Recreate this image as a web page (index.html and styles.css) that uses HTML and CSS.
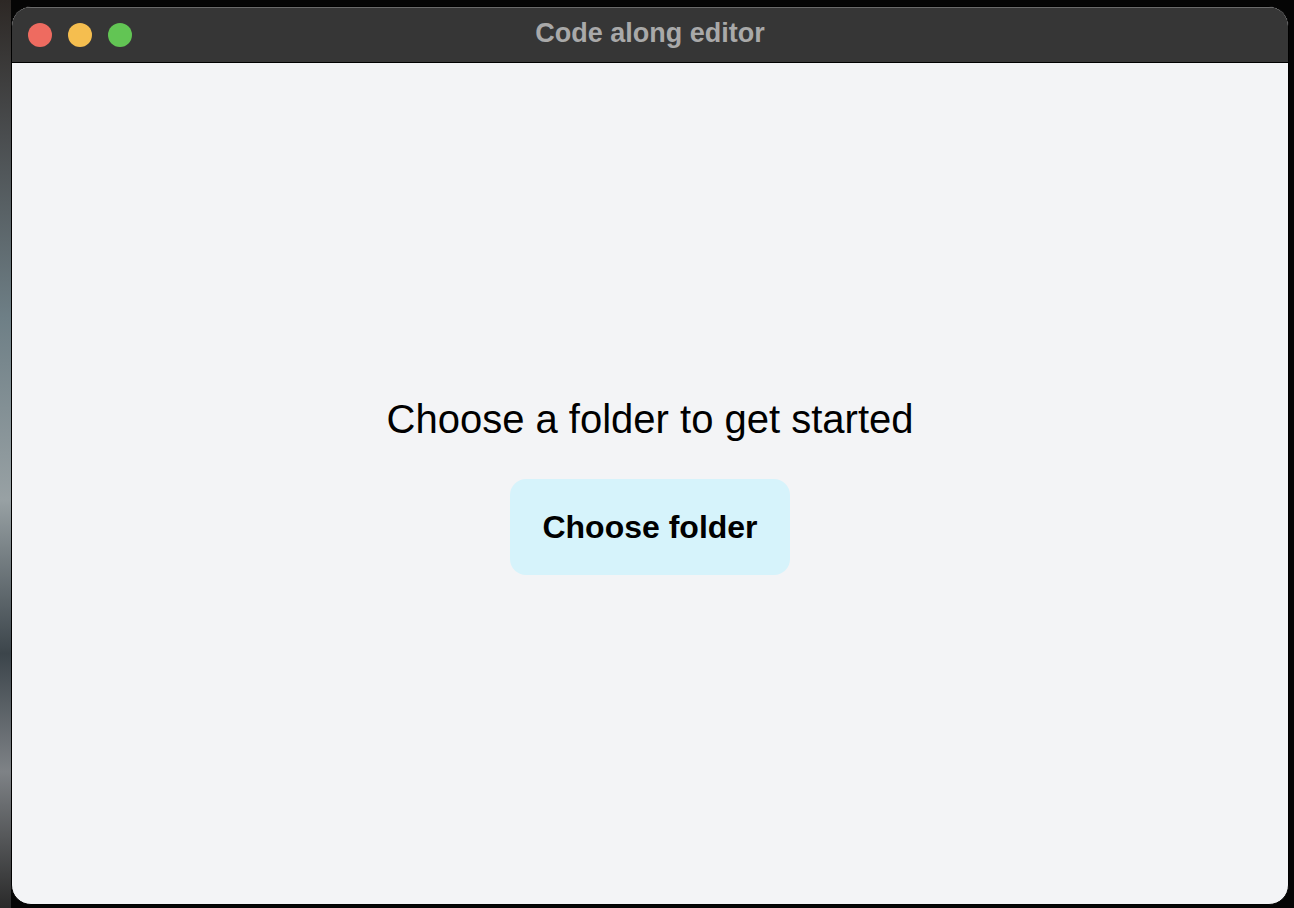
FILE: index.html
```html
<!DOCTYPE html>
<html lang="en">
<head>
<meta charset="utf-8">
<title>Code along editor</title>
<link rel="stylesheet" href="styles.css">
</head>
<body>
<div class="window">
  <header class="titlebar">
    <div class="lights">
      <span class="light red"></span>
      <span class="light yellow"></span>
      <span class="light green"></span>
    </div>
    <div class="title">Code along editor</div>
    <div class="spacer"></div>
  </header>
  <main class="content">
    <h1 class="prompt">Choose a folder to get started</h1>
    <button class="choose">Choose folder</button>
  </main>
</div>
</body>
</html>
```

FILE: styles.css
```css
html, body {
  margin: 0;
  height: 100%;
}
body {
  box-sizing: border-box;
  padding: 6px 5px 3px 11px;
  background:
    linear-gradient(to bottom, #2d2825 0%, #4a4d4f 15%, #6e7f86 35%, #98a1a4 55%, #3c454b 72%, #7e8286 85%, #2a2a2a 100%) left top / 11px 100% no-repeat,
    #050505;
  font-family: "Liberation Sans", Arial, Helvetica, sans-serif;
}
.window {
  box-sizing: border-box;
  height: 100%;
  display: flex;
  flex-direction: column;
  border: 1px solid #000;
  border-radius: 20px;
  overflow: hidden;
  background: #f3f4f6;
}
.titlebar {
  flex: 0 0 auto;
  height: 55px;
  background: #363636;
  border-bottom: 1px solid #000;
  box-shadow: inset 0 1px 0 #6a6a6a;
  display: grid;
  grid-template-columns: 1fr auto 1fr;
  align-items: center;
  padding: 0 16px;
}
.lights {
  display: flex;
  gap: 16px;
}
.light {
  width: 24px;
  height: 24px;
  border-radius: 50%;
}
.red { background: #ee6b60; }
.yellow { background: #f5be4f; }
.green { background: #62c554; }
.title {
  color: #a9a9a9;
  font-weight: bold;
  font-size: 27px;
  margin-top: -3px;
}
.content {
  flex: 1 1 auto;
  display: flex;
  flex-direction: column;
  align-items: center;
  justify-content: center;
  padding-bottom: 2px;
}
.prompt {
  margin: 0 0 32px 0;
  font-size: 40px;
  line-height: 56px;
  font-weight: normal;
  color: #000;
}
.choose {
  font-family: inherit;
  font-size: 32px;
  line-height: 48px;
  font-weight: bold;
  color: #000;
  background: #d6f3fb;
  border: none;
  border-radius: 16px;
  padding: 24px 32px;
  cursor: pointer;
}
```
